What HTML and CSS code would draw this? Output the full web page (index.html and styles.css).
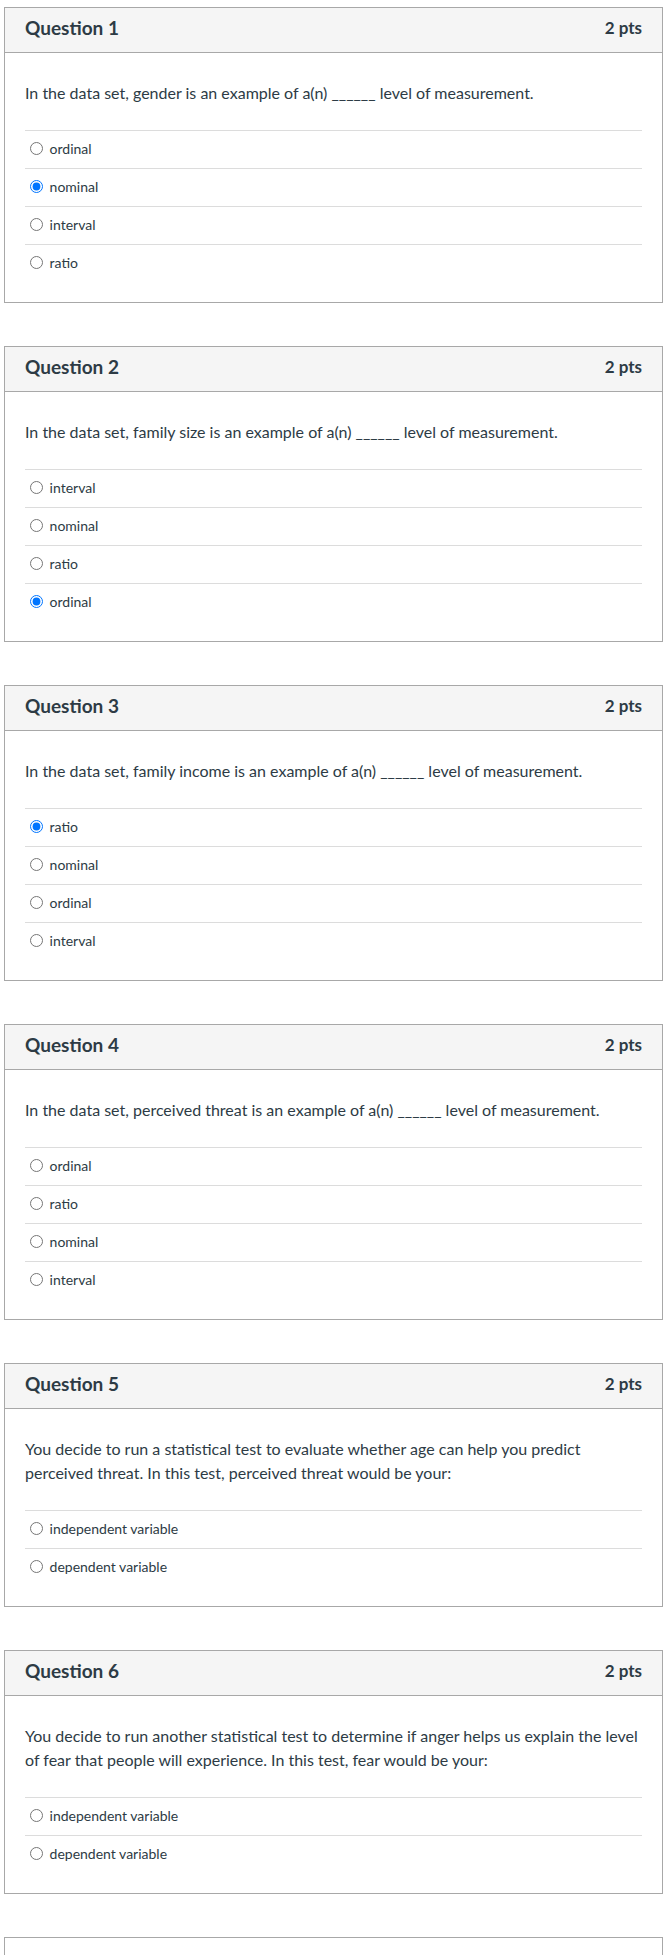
FILE: index.html
```html
<!DOCTYPE html>
<html lang="en">
<head>
<meta charset="utf-8">
<title>Quiz</title>
<link rel="stylesheet" href="styles.css">
</head>
<body>
<div class="quiz">
  <div class="question">
    <div class="q-header"><span class="q-title">Question 1</span><span class="q-pts">2 pts</span></div>
    <div class="q-body">
      <p class="q-text">In the data set, gender is an example of a(n) ______ level of measurement.</p>
      <div class="answers">
        <label class="answer"><input type="radio" name="q1"> ordinal</label>
        <label class="answer"><input type="radio" name="q1" checked> nominal</label>
        <label class="answer"><input type="radio" name="q1"> interval</label>
        <label class="answer"><input type="radio" name="q1"> ratio</label>
      </div>
    </div>
  </div>

  <div class="question">
    <div class="q-header"><span class="q-title">Question 2</span><span class="q-pts">2 pts</span></div>
    <div class="q-body">
      <p class="q-text">In the data set, family size is an example of a(n) ______ level of measurement.</p>
      <div class="answers">
        <label class="answer"><input type="radio" name="q2"> interval</label>
        <label class="answer"><input type="radio" name="q2"> nominal</label>
        <label class="answer"><input type="radio" name="q2"> ratio</label>
        <label class="answer"><input type="radio" name="q2" checked> ordinal</label>
      </div>
    </div>
  </div>

  <div class="question">
    <div class="q-header"><span class="q-title">Question 3</span><span class="q-pts">2 pts</span></div>
    <div class="q-body">
      <p class="q-text">In the data set, family income is an example of a(n) ______ level of measurement.</p>
      <div class="answers">
        <label class="answer"><input type="radio" name="q3" checked> ratio</label>
        <label class="answer"><input type="radio" name="q3"> nominal</label>
        <label class="answer"><input type="radio" name="q3"> ordinal</label>
        <label class="answer"><input type="radio" name="q3"> interval</label>
      </div>
    </div>
  </div>

  <div class="question">
    <div class="q-header"><span class="q-title">Question 4</span><span class="q-pts">2 pts</span></div>
    <div class="q-body">
      <p class="q-text">In the data set, perceived threat is an example of a(n) ______ level of measurement.</p>
      <div class="answers">
        <label class="answer"><input type="radio" name="q4"> ordinal</label>
        <label class="answer"><input type="radio" name="q4"> ratio</label>
        <label class="answer"><input type="radio" name="q4"> nominal</label>
        <label class="answer"><input type="radio" name="q4"> interval</label>
      </div>
    </div>
  </div>

  <div class="question">
    <div class="q-header"><span class="q-title">Question 5</span><span class="q-pts">2 pts</span></div>
    <div class="q-body">
      <p class="q-text">You decide to run a statistical test to evaluate whether age can help you predict perceived threat. In this test, perceived threat would be your:</p>
      <div class="answers">
        <label class="answer"><input type="radio" name="q5"> independent variable</label>
        <label class="answer"><input type="radio" name="q5"> dependent variable</label>
      </div>
    </div>
  </div>

  <div class="question">
    <div class="q-header"><span class="q-title">Question 6</span><span class="q-pts">2 pts</span></div>
    <div class="q-body">
      <p class="q-text">You decide to run another statistical test to determine if anger helps us explain the level of fear that people will experience. In this test, fear would be your:</p>
      <div class="answers">
        <label class="answer"><input type="radio" name="q6"> independent variable</label>
        <label class="answer"><input type="radio" name="q6"> dependent variable</label>
      </div>
    </div>
  </div>

  <div class="question question-next"></div>
</div>
</body>
</html>
```

FILE: styles.css
```css
html, body {
  margin: 0;
  padding: 0;
  background: #ffffff;
}

body {
  font-family: "Lato", "Liberation Sans", sans-serif;
  color: #2d3b45;
}

.quiz {
  padding: 7px 0 0 4px;
  width: 659px;
}

.question {
  border: 1px solid #a8a8a8;
  background: #ffffff;
  margin-bottom: 43px;
}

.q-header {
  display: flex;
  justify-content: space-between;
  align-items: center;
  height: 40px;
  padding: 0 20px 4px 20px;
  background: #f5f5f5;
  border-bottom: 1px solid #a8a8a8;
}

.q-title {
  font-size: 19px;
  font-weight: 700;
  line-height: 22px;
}

.q-pts {
  font-size: 17px;
  font-weight: 700;
  line-height: 22px;
}

.q-body {
  padding: 28px 20px 20px 20px;
}

.q-text {
  margin: 0 0 25px 0;
  font-size: 16px;
  line-height: 24px;
}

.answers {
  display: flex;
  flex-direction: column;
}

.answer {
  display: flex;
  align-items: center;
  height: 34px;
  padding-bottom: 3px;
  border-top: 1px solid #dcdcdc;
  font-size: 14px;
  white-space: pre;
}

.answer input {
  margin: 0 3px 0 5px;
  width: 13px;
  height: 13px;
}

.question-next {
  height: 60px;
  margin-bottom: 0;
}
```
